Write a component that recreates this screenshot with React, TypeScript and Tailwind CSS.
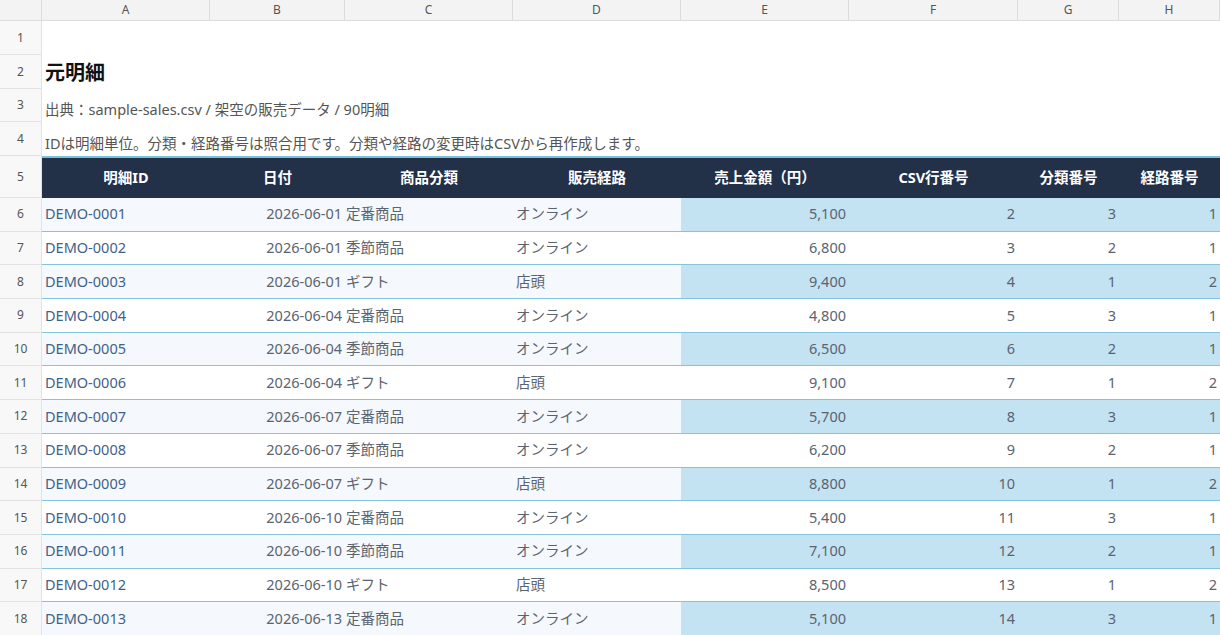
const cols = ["A", "B", "C", "D", "E", "F", "G", "H"];
const widths = ["w-[168px]", "w-[135px]", "w-[168px]", "w-[168px]", "w-[168px]", "w-[169px]", "w-[101px]", "w-[101px]"];

const rows = [
  ["DEMO-0001", "2026-06-01", "定番商品", "オンライン", "5,100", "2", "3", "1"],
  ["DEMO-0002", "2026-06-01", "季節商品", "オンライン", "6,800", "3", "2", "1"],
  ["DEMO-0003", "2026-06-01", "ギフト", "店頭", "9,400", "4", "1", "2"],
  ["DEMO-0004", "2026-06-04", "定番商品", "オンライン", "4,800", "5", "3", "1"],
  ["DEMO-0005", "2026-06-04", "季節商品", "オンライン", "6,500", "6", "2", "1"],
  ["DEMO-0006", "2026-06-04", "ギフト", "店頭", "9,100", "7", "1", "2"],
  ["DEMO-0007", "2026-06-07", "定番商品", "オンライン", "5,700", "8", "3", "1"],
  ["DEMO-0008", "2026-06-07", "季節商品", "オンライン", "6,200", "9", "2", "1"],
  ["DEMO-0009", "2026-06-07", "ギフト", "店頭", "8,800", "10", "1", "2"],
  ["DEMO-0010", "2026-06-10", "定番商品", "オンライン", "5,400", "11", "3", "1"],
  ["DEMO-0011", "2026-06-10", "季節商品", "オンライン", "7,100", "12", "2", "1"],
  ["DEMO-0012", "2026-06-10", "ギフト", "店頭", "8,500", "13", "1", "2"],
  ["DEMO-0013", "2026-06-13", "定番商品", "オンライン", "5,100", "14", "3", "1"],
];

const headers = ["明細ID", "日付", "商品分類", "販売経路", "売上金額（円）", "CSV行番号", "分類番号", "経路番号"];

function RowNum({ n, h }: { n: number; h: string }) {
  return (
    <div className={`w-[42px] shrink-0 ${h} bg-[#f8f8f8] border-r border-b border-[#e2e2e2] flex items-center justify-center text-[12px] text-[#555]`}>
      {n}
    </div>
  );
}

function TextRow({ n, h, children }: { n: number; h: string; children?: React.ReactNode }) {
  return (
    <div className="flex">
      <RowNum n={n} h={h} />
      <div className={`flex-1 ${h} flex items-end pl-[3px] pb-[6px]`}>{children}</div>
    </div>
  );
}

export default function App() {
  return (
    <div className="w-[1220px] h-[635px] overflow-hidden bg-white" style={{ fontFamily: '"Noto Sans", "Noto Sans CJK JP", sans-serif' }}>
      <div className="flex h-[21px]">
        <div className="w-[42px] shrink-0 bg-[#f3f3f3] border-r border-b border-[#dcdcdc]" />
        {cols.map((c, i) => (
          <div key={c} className={`${widths[i]} shrink-0 bg-[#f3f3f3] border-r border-b border-[#dcdcdc] flex items-center justify-center text-[12px] text-[#555]`}>
            {c}
          </div>
        ))}
      </div>
      <TextRow n={1} h="h-[34px]" />
      <TextRow n={2} h="h-[34px]">
        <span className="text-[20px] font-bold text-[#111] leading-none">元明細</span>
      </TextRow>
      <TextRow n={3} h="h-[33px]">
        <span className="text-[14.5px] text-[#555] leading-none">出典：sample-sales.csv / 架空の販売データ / 90明細</span>
      </TextRow>
      <TextRow n={4} h="h-[34px]">
        <span className="text-[14.5px] text-[#555] leading-none">IDは明細単位。分類・経路番号は照合用です。分類や経路の変更時はCSVから再作成します。</span>
      </TextRow>
      <div className="flex">
        <RowNum n={5} h="h-[42px]" />
        <div className="flex bg-[#223048] border-t-2 border-[#7cc0de] h-[42px]">
          {headers.map((t, i) => (
            <div key={t} className={`${widths[i]} shrink-0 flex items-center justify-center text-white font-bold text-[14.5px]`}>
              {t}
            </div>
          ))}
        </div>
      </div>
      {rows.map((r, ri) => {
        const alt = ri % 2 === 0;
        const left = alt ? "bg-[#f5f8fc]" : "bg-white";
        const right = alt ? "bg-[#c3e3f3]" : "bg-white";
        return (
          <div key={r[0]} className="flex">
            <RowNum n={ri + 6} h="h-[33.7px]" />
            <div className="flex h-[33.7px] border-b border-[#86c3dd] text-[14.5px] text-[#5a6470]">
              <div className={`${widths[0]} ${left} flex items-center pl-[3px] text-[#3f6288]`}>{r[0]}</div>
              <div className={`${widths[1]} ${left} flex items-center justify-end pr-[3px]`}>{r[1]}</div>
              <div className={`${widths[2]} ${left} flex items-center pl-[1px]`}>{r[2]}</div>
              <div className={`${widths[3]} ${left} flex items-center pl-[3px]`}>{r[3]}</div>
              {[4, 5, 6, 7].map((k) => (
                <div key={k} className={`${widths[k]} ${right} flex items-center justify-end pr-[3px]`}>{r[k]}</div>
              ))}
            </div>
          </div>
        );
      })}
    </div>
  );
}
